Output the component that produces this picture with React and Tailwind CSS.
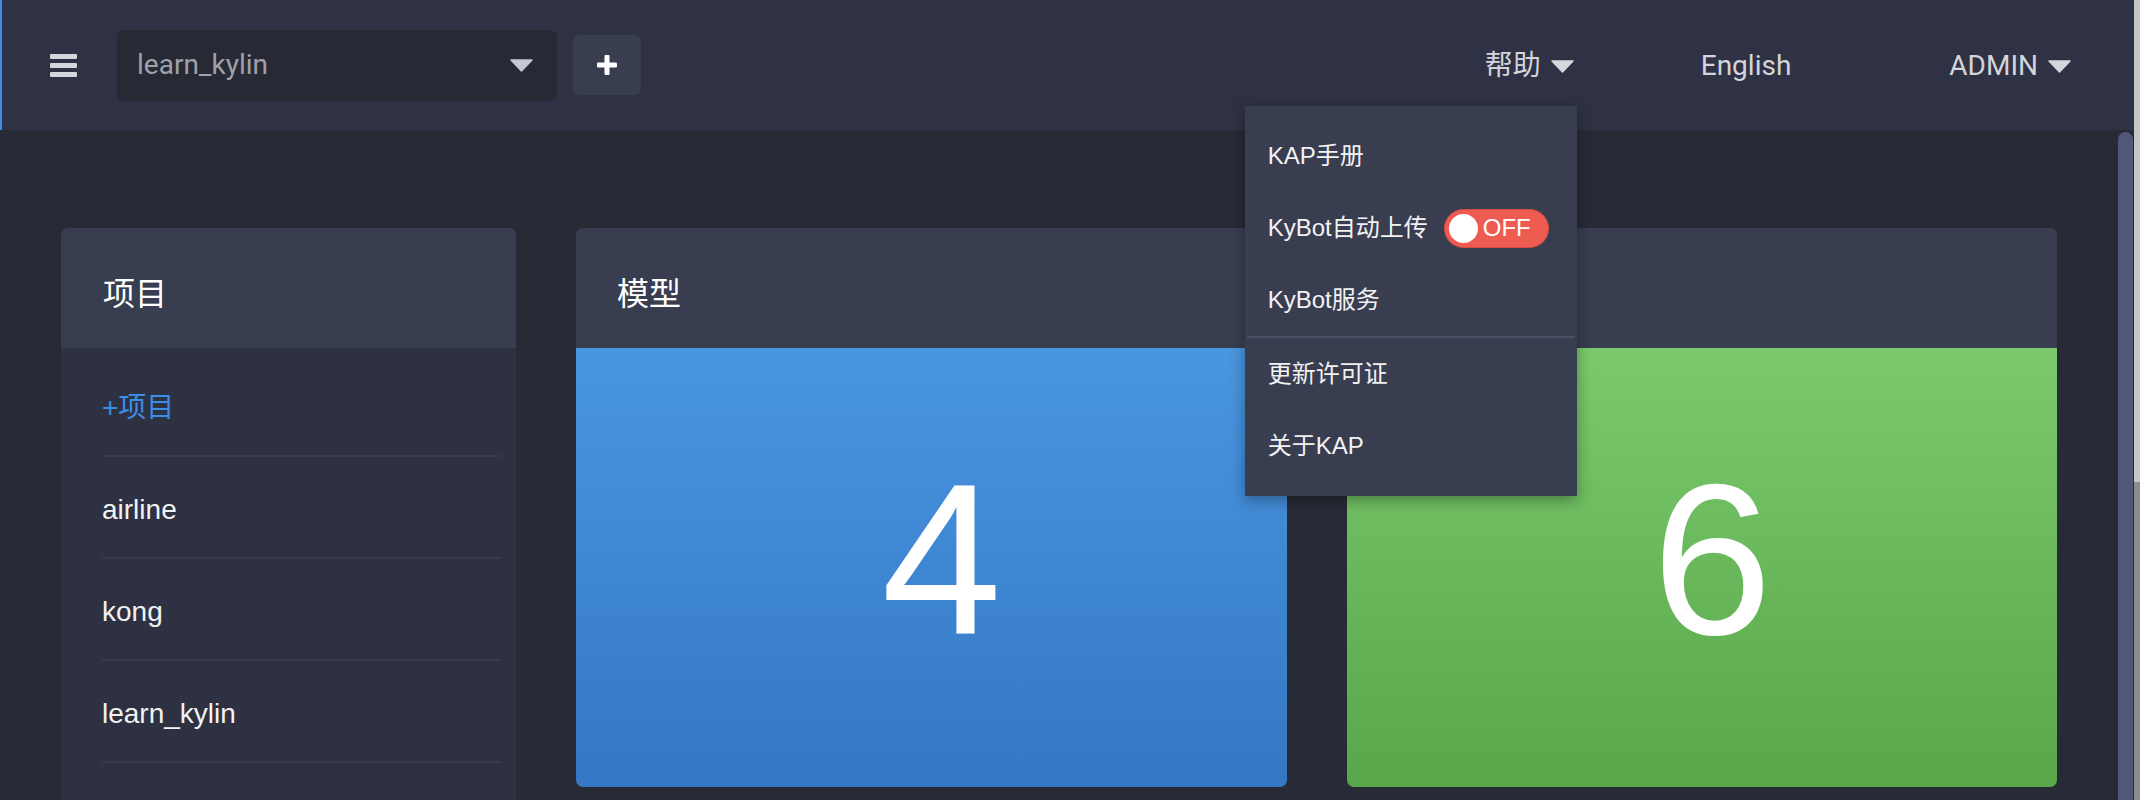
import React from 'react';

const sans = { fontFamily: '"Liberation Sans", "Noto Sans CJK SC", Arial, sans-serif' };

function Caret({ className }) {
  return (
    <svg width="23" height="13" viewBox="0 0 23 13" className={className}>
      <path d="M1 1 L22 1 L11.5 12 Z" fill="currentColor" stroke="currentColor" strokeWidth="1.5" strokeLinejoin="round" />
    </svg>
  );
}

function Header() {
  return (
    <header
      className="relative z-10 shrink-0 flex items-center h-[130px] bg-[#2f3244] border-l-2 border-[#3b8ee8] pl-[48px] pr-[63px] text-[28px] text-[#d3d5db]"
      style={{ fontFamily: 'Roboto, "Noto Sans CJK SC", sans-serif' }}
    >
      <button className="flex flex-col gap-[4px] w-[27px]">
        <span className="h-[5px] w-full rounded-[1px] bg-[#d5d7df]" />
        <span className="h-[5px] w-full rounded-[1px] bg-[#d5d7df]" />
        <span className="h-[5px] w-full rounded-[1px] bg-[#d5d7df]" />
      </button>

      <div className="ml-[40px] flex items-center justify-between w-[440px] h-[71px] rounded-[7px] bg-[#272935] pl-[20px] pr-[24px]">
        <span className="text-[#9fa1aa]">learn_kylin</span>
        <Caret className="text-[#c3c9d3]" />
      </div>

      <button className="ml-[16px] flex items-center justify-center w-[68px] h-[60px] rounded-[6px] bg-[#393d50]">
        <svg width="20" height="20" viewBox="0 0 20 20">
          <rect x="7.5" y="0" width="5" height="20" rx="1" fill="#fff" />
          <rect x="0" y="7.5" width="20" height="5" rx="1" fill="#fff" />
        </svg>
      </button>

      <div className="ml-auto flex items-center h-full pt-[2px]">
        <div className="relative flex items-center h-full">
          <button className="flex items-center gap-[10px] pr-[3px] ml-[3px]">
            <span>帮助</span>
            <Caret className="text-[#d5d7dd]" />
          </button>
          <div
            className="absolute right-0 top-[104px] z-10 w-[332px] bg-[#393d50] py-[14px] shadow-[0_4px_14px_rgba(0,0,0,0.35)] text-[24px] text-[#f2f2f2]"
            style={sans}
          >
            <div className="h-[72px] flex items-center pl-[23px]">KAP手册</div>
            <div className="h-[72px] flex items-center pl-[23px]">
              <span>KyBot自动上传</span>
              <div className="ml-[16px] flex items-center w-[105px] h-[39px] rounded-full bg-[#ee5b50] border border-[#d64c42] pl-[4px]">
                <span className="w-[29px] h-[29px] rounded-full bg-white" />
                <span className="ml-[5px] text-white">OFF</span>
              </div>
            </div>
            <div className="h-[72px] flex items-center pl-[23px]">KyBot服务</div>
            <div className="mx-[2px] h-[2px] bg-[#4a4e66]" />
            <div className="h-[72px] flex items-center pl-[23px]">更新许可证</div>
            <div className="h-[72px] flex items-center pl-[23px]">关于KAP</div>
          </div>
        </div>
        <span className="ml-[124px]">English</span>
        <button className="ml-[158px] flex items-center gap-[10px]">
          <span>ADMIN</span>
          <Caret className="text-[#d5d7dd]" />
        </button>
      </div>
    </header>
  );
}

function ProjectCard() {
  const projects = ['airline', 'kong', 'learn_kylin'];
  return (
    <div className="w-[455px] h-[700px] shrink-0 rounded-t-[7px] overflow-hidden bg-[#2e3142]">
      <div className="h-[120px] flex items-center pl-[42px] pt-[12px] bg-[#393d50] text-[32px] text-white">项目</div>
      <ul className="ml-[41px] mr-[16px] pt-[7px] text-[28px] text-[#f2f2f2]">
        <li className="h-[102px] flex items-center pt-[5px] border-b-2 border-[#383b4c] text-[#3b8ee5]">+项目</li>
        {projects.map((p) => (
          <li key={p} className="h-[102px] flex items-center pt-[5px] border-b-2 border-[#383b4c]">
            {p}
          </li>
        ))}
      </ul>
    </div>
  );
}

function StatCard({ title, value, gradient, width }) {
  return (
    <div className={`${width} h-[559px] shrink-0 flex flex-col rounded-[7px] overflow-hidden`}>
      <div className="h-[120px] shrink-0 flex items-center pl-[41px] pt-[12px] bg-[#393d50] text-[32px] text-white">{title}</div>
      <div className={`flex-1 flex items-center justify-center pl-[20px] pb-[18px] text-white text-[216px] leading-none ${gradient}`}>
        {value}
      </div>
    </div>
  );
}

function App() {
  return (
    <div className="flex w-[2140px] h-[800px] overflow-hidden bg-[#282a36]" style={sans}>
      <div className="flex flex-col w-[2134px] h-full">
        <Header />
        <div className="flex flex-1 min-h-0">
          <main className="flex-1 min-h-0 overflow-hidden flex items-start gap-[60px] pl-[61px] pt-[98px]">
            <ProjectCard />
            <StatCard title="模型" value="4" width="w-[711px]" gradient="bg-gradient-to-b from-[#4a96e0] to-[#3477c5]" />
            <StatCard title="" value="6" width="w-[710px]" gradient="bg-gradient-to-b from-[#7aca6c] to-[#5aa64b]" />
          </main>
          <div className="w-[15px] mt-[2px] mr-[1px] rounded-t-full bg-[#50577a]" />
        </div>
      </div>
      <div className="w-[6px] flex flex-col">
        <div className="h-[482px] bg-[#c6c6c6]" />
        <div className="flex-1 bg-[#8c8c8c]" />
      </div>
    </div>
  );
}

export default App;
